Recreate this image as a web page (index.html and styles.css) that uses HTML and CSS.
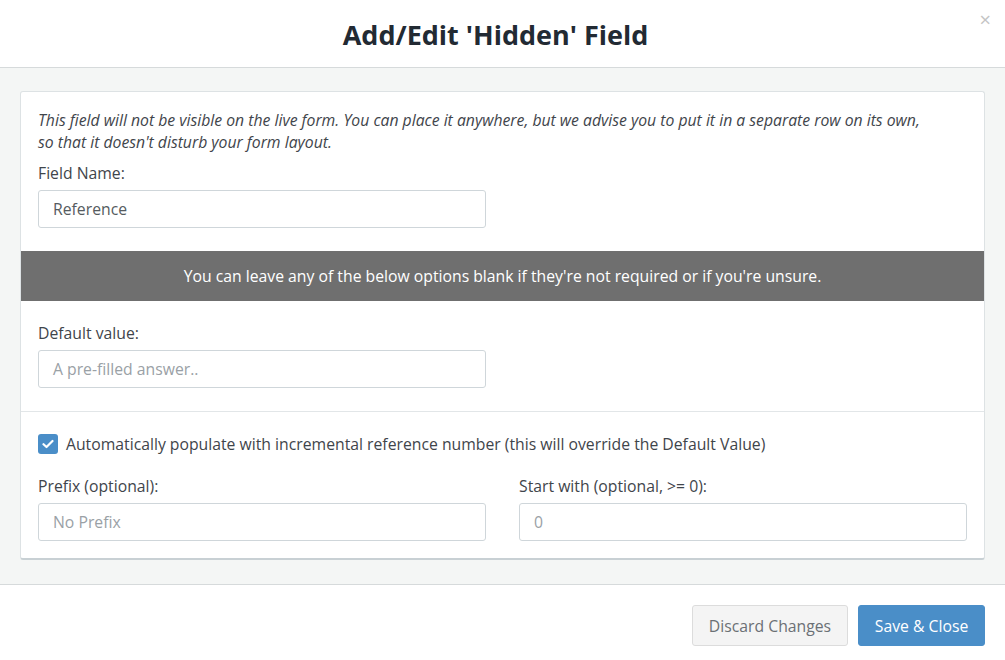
FILE: index.html
```html
<!DOCTYPE html>
<html>
<head>
<meta charset="utf-8">
<link rel="stylesheet" href="styles.css">
</head>
<body>
<div class="modal">
  <header class="modal-header">
    <h1 class="title">Add/Edit 'Hidden' Field</h1>
    <span class="close">×</span>
  </header>
  <main class="modal-body">
    <section class="card">
      <div class="section first">
        <p class="note">This field will not be visible on the live form. You can place it anywhere, but we advise you to put it in a separate row on its own, so that it doesn't disturb your form layout.</p>
        <label class="label">Field Name:</label>
        <div class="input half">Reference</div>
      </div>
      <div class="band">You can leave any of the below options blank if they're not required or if you're unsure.</div>
      <div class="section second">
        <label class="label">Default value:</label>
        <div class="input half placeholder">A pre-filled answer..</div>
      </div>
      <div class="section third">
        <div class="check-row">
          <span class="checkbox"><svg width="12" height="10" viewBox="0 0 12 10"><path d="M1.5 5.2 L4.5 8 L10.5 2" fill="none" stroke="#fff" stroke-width="2.2" stroke-linecap="round" stroke-linejoin="round"/></svg></span>
          <span class="check-label">Automatically populate with incremental reference number (this will override the Default Value)</span>
        </div>
        <div class="cols">
          <div class="col">
            <label class="label">Prefix (optional):</label>
            <div class="input placeholder">No Prefix</div>
          </div>
          <div class="col">
            <label class="label">Start with (optional, &gt;= 0):</label>
            <div class="input placeholder">0</div>
          </div>
        </div>
      </div>
    </section>
  </main>
  <footer class="modal-footer">
    <button class="btn btn-default">Discard Changes</button>
    <button class="btn btn-primary">Save &amp; Close</button>
  </footer>
</div>
</body>
</html>
```

FILE: styles.css
```css
* { box-sizing: border-box; }
html, body { margin: 0; padding: 0; background: #fff; }
body {
  font-family: "Open Sans", "Noto Sans", sans-serif;
  color: #3a3f44;
  width: 1005px;
  height: 660px;
  overflow: hidden;
}
.modal { display: flex; flex-direction: column; height: 660px; }
.modal-header {
  position: relative;
  height: 68px;
  padding-right: 14px;
  border-bottom: 1px solid #d6dadb;
  display: flex;
  align-items: center;
  justify-content: center;
}
.title {
  margin: 0;
  font-size: 27px;
  font-weight: 700;
  color: #222a33;
  padding-top: 1px;
}
.close {
  position: absolute;
  right: 14px;
  top: 8px;
  font-size: 20px;
  color: #c4c4c4;
  line-height: 24px;
}
.modal-body {
  background: #f4f6f5;
  padding: 23px 20px 24px 20px;
  border-bottom: 1px solid #d6dadb;
}
.card {
  background: #fff;
  border: 1px solid #dde2e4;
  border-bottom: 2px solid #c8d0d4;
  border-radius: 3px;
}
.section { padding: 0 17px; }
.section.first { padding-top: 17px; padding-bottom: 23px; }
.note {
  margin: 0;
  max-width: 890px;
  font-style: italic;
  font-size: 15.75px;
  line-height: 22px;
  color: #3f454b;
}
.label {
  display: block;
  font-size: 15.75px;
  line-height: 22px;
  color: #3f454b;
  margin-top: 9px;
  margin-bottom: 6px;
}
.section.second .label { margin-top: 0; }
.input {
  height: 38px;
  border: 1px solid #cfd6da;
  border-radius: 3px;
  padding: 0 14px;
  font-size: 15.75px;
  line-height: 36px;
  color: #555b60;
}
.input.half { width: 448px; }
.input.placeholder { color: #9aa1a6; }
.band {
  background: #6f6f6f;
  color: #fff;
  height: 50px;
  line-height: 50px;
  text-align: center;
  font-size: 15.75px;
}
.section.second {
  padding-top: 21px;
  padding-bottom: 23px;
  border-bottom: 1px solid #e2e6e8;
}
.section.third { padding-top: 21px; padding-bottom: 17px; }
.check-row { display: flex; align-items: center; gap: 8px; height: 22px; }
.checkbox {
  width: 20px; height: 20px;
  background: #4a8ec8;
  border-radius: 3px;
  display: flex; align-items: center; justify-content: center;
}
.check-label { font-size: 15.75px; color: #3f454b; line-height: 22px; }
.cols { display: grid; grid-template-columns: 448px 448px; column-gap: 33px; margin-top: 20px; }
.cols .label { margin-top: 0; }
.modal-footer {
  flex: 1;
  display: flex;
  justify-content: flex-end;
  align-items: flex-start;
  gap: 10px;
  padding: 20px 20px 0 0;
}
.btn {
  height: 41px;
  border-radius: 3px;
  font-family: "Open Sans", "Noto Sans", sans-serif;
  font-size: 15.75px;
  padding: 0;
  white-space: nowrap;
  cursor: pointer;
}
.btn-default { background: #f4f4f4; border: 1px solid #dcdcdc; color: #6b7075; width: 156px; }
.btn-primary { background: #4a8ec8; border: 1px solid #4a8ec8; color: #fff; width: 127px; }
```
